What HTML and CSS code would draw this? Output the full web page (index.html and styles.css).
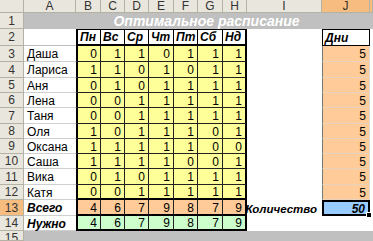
FILE: index.html
```html
<!DOCTYPE html>
<html>
<head>
<meta charset="utf-8">
<link rel="stylesheet" href="styles.css">
</head>
<body>
<div class="sheet">
  <div class="ch"></div>
  <div class="ch">A</div><div class="ch">B</div><div class="ch">C</div><div class="ch">D</div><div class="ch">E</div><div class="ch">F</div><div class="ch">G</div><div class="ch">H</div><div class="ch">I</div><div class="ch sel">J</div><div class="ch sel"></div>

  <div class="rh">1</div>
  <div class="title">Оптимальное расписание</div>

  <div class="rh">2</div>
  <div class="c a top"></div>
  <div class="c hd first">Пн</div><div class="c hd">Вс</div><div class="c hd">Ср</div><div class="c hd">Чт</div><div class="c hd">Пт</div><div class="c hd">Сб</div><div class="c hd last">Нд</div>
  <div class="c i"></div><div class="c hd dni">Дни</div><div class="c k"></div>

  <div class="rh">3</div><div class="c a">Даша</div>
  <div class="c n y bl">0</div><div class="c n y">1</div><div class="c n y">1</div><div class="c n y">0</div><div class="c n y">1</div><div class="c n y">1</div><div class="c n y br">1</div>
  <div class="c i"></div><div class="c n j">5</div><div class="c k"></div>

  <div class="rh">4</div><div class="c a">Лариса</div>
  <div class="c n y bl">1</div><div class="c n y">1</div><div class="c n y">0</div><div class="c n y">1</div><div class="c n y">0</div><div class="c n y">1</div><div class="c n y br">1</div>
  <div class="c i"></div><div class="c n j">5</div><div class="c k"></div>

  <div class="rh">5</div><div class="c a">Аня</div>
  <div class="c n y bl">0</div><div class="c n y">1</div><div class="c n y">0</div><div class="c n y">1</div><div class="c n y">1</div><div class="c n y">1</div><div class="c n y br">1</div>
  <div class="c i"></div><div class="c n j">5</div><div class="c k"></div>

  <div class="rh">6</div><div class="c a">Лена</div>
  <div class="c n y bl">0</div><div class="c n y">0</div><div class="c n y">1</div><div class="c n y">1</div><div class="c n y">1</div><div class="c n y">1</div><div class="c n y br">1</div>
  <div class="c i"></div><div class="c n j">5</div><div class="c k"></div>

  <div class="rh">7</div><div class="c a">Таня</div>
  <div class="c n y bl">0</div><div class="c n y">0</div><div class="c n y">1</div><div class="c n y">1</div><div class="c n y">1</div><div class="c n y">1</div><div class="c n y br">1</div>
  <div class="c i"></div><div class="c n j">5</div><div class="c k"></div>

  <div class="rh">8</div><div class="c a">Оля</div>
  <div class="c n y bl">1</div><div class="c n y">0</div><div class="c n y">1</div><div class="c n y">1</div><div class="c n y">1</div><div class="c n y">0</div><div class="c n y br">1</div>
  <div class="c i"></div><div class="c n j">5</div><div class="c k"></div>

  <div class="rh">9</div><div class="c a">Оксана</div>
  <div class="c n y bl">1</div><div class="c n y">1</div><div class="c n y">1</div><div class="c n y">1</div><div class="c n y">1</div><div class="c n y">0</div><div class="c n y br">0</div>
  <div class="c i"></div><div class="c n j">5</div><div class="c k"></div>

  <div class="rh">10</div><div class="c a">Саша</div>
  <div class="c n y bl">1</div><div class="c n y">1</div><div class="c n y">1</div><div class="c n y">1</div><div class="c n y">0</div><div class="c n y">0</div><div class="c n y br">1</div>
  <div class="c i"></div><div class="c n j">5</div><div class="c k"></div>

  <div class="rh">11</div><div class="c a">Вика</div>
  <div class="c n y bl">0</div><div class="c n y">1</div><div class="c n y">0</div><div class="c n y">1</div><div class="c n y">1</div><div class="c n y">1</div><div class="c n y br">1</div>
  <div class="c i"></div><div class="c n j">5</div><div class="c k"></div>

  <div class="rh">12</div><div class="c a">Катя</div>
  <div class="c n y bl bb">0</div><div class="c n y bb">0</div><div class="c n y bb">1</div><div class="c n y bb">1</div><div class="c n y bb">1</div><div class="c n y bb">1</div><div class="c n y br bb">1</div>
  <div class="c i"></div><div class="c n j">5</div><div class="c k"></div>

  <div class="rh sel">13</div><div class="c a bi">Всего</div>
  <div class="c n o bl bb">4</div><div class="c n o bb">6</div><div class="c n o bb">7</div><div class="c n o bb">9</div><div class="c n o bb">8</div><div class="c n o bb">7</div><div class="c n o br bb">9</div>
  <div class="c i bi r kol">Количество</div><div class="c n active bi">50<span class="handle"></span></div><div class="c k"></div>

  <div class="rh">14</div><div class="c a bi">Нужно</div>
  <div class="c n g bl bb">4</div><div class="c n g bb">6</div><div class="c n g bb">7</div><div class="c n g bb">9</div><div class="c n g bb">8</div><div class="c n g bb">7</div><div class="c n g br bb">9</div>
  <div class="c i"></div><div class="c i"></div><div class="c k"></div>

  <div class="rh last-row">15</div>
  <div class="grey"></div>
</div>
</body>
</html>
```

FILE: styles.css
```css
* { box-sizing: border-box; }
html, body { margin: 0; padding: 0; background: #fff; }
.sheet {
  display: grid;
  grid-template-columns: 24px 52px 25px 24px 24px 25px 24px 25px 24px 75px 48px 3px;
  grid-template-rows: 13px 16px 17px 16px 16px 15px 15px 16px 15px 15px 15px 16px 15px 16px 15px 10px;
  width: 373px;
  height: 241px;
  font-family: "Liberation Sans", Arial, sans-serif;
  font-size: 12px;
  color: #000;
  overflow: hidden;
}
.ch, .rh {
  background: #e9e7dd;
  color: #333;
  font-size: 12px;
  display: flex;
  align-items: center;
  justify-content: center;
  border-right: 1px solid #b4b2a4;
  border-bottom: 1px solid #b4b2a4;
  line-height: 1;
}
.ch.sel, .rh.sel { background: #f7bd80; }
.last-row { align-items: flex-start; padding-top: 1px; overflow: hidden; }
.title {
  grid-column: 2 / 13;
  background: #c0c0c0;
  color: #fff;
  font-weight: bold;
  font-style: italic;
  font-size: 14px;
  display: flex;
  align-items: center;
  justify-content: center;
  padding-left: 16px;
}
.grey { grid-column: 2 / 13; background: #c0c0c0; }
.c {
  display: flex;
  align-items: center;
  padding: 1px 3px 0 3px;
  white-space: nowrap;
  border-bottom: 1px solid #d4d4d4;
}
.n { justify-content: flex-end; }
.a { border-bottom: 1px solid #cfcfcf; }
.a.top { border-bottom: 1px solid #bdbdbd; }
.i { border-bottom: none; }
.r { justify-content: flex-end; padding-right: 4px; }
.kol { font-size: 11.5px; padding-right: 5px; }
.bi { font-weight: bold; font-style: italic; }
.k { border-bottom: none; }
.hd {
  font-weight: bold;
  font-style: italic;
  border-right: 1px solid #000;
  border-bottom: 2px solid #000;
  box-shadow: inset 0 1px 0 #000;
  padding-left: 2px;
}
.hd.first { box-shadow: inset 2px 1px 0 #000; padding-left: 4px; }
.hd.last { border-right: 2px solid #000; }
.hd.dni { border: 1px solid #000; border-top: none; padding-left: 2px; }
.y { background: #ffff99; border-right: 1px solid #222; border-bottom: 1px solid #222; }
.o { background: #ffcc99; border-right: 1px solid #222; }
.g { background: #ccffcc; border-right: 1px solid #222; }
.bl { box-shadow: inset 2px 0 0 #000; }
.br { border-right: 2px solid #000; }
.bb { border-bottom: 2px solid #000; }
.j {
  background: #ffcc99;
  border-left: 1px solid #777;
  border-right: 1px solid #d9d9d9;
  border-bottom: 1px solid #e8d3c0;
}
.active {
  background: #99ccff;
  border: 2px solid #000;
  position: relative;
  padding-right: 3px;
}
.handle {
  position: absolute;
  right: -4px;
  bottom: -4px;
  width: 6px;
  height: 6px;
  background: #000;
  border: 1px solid #fff;
}
```
